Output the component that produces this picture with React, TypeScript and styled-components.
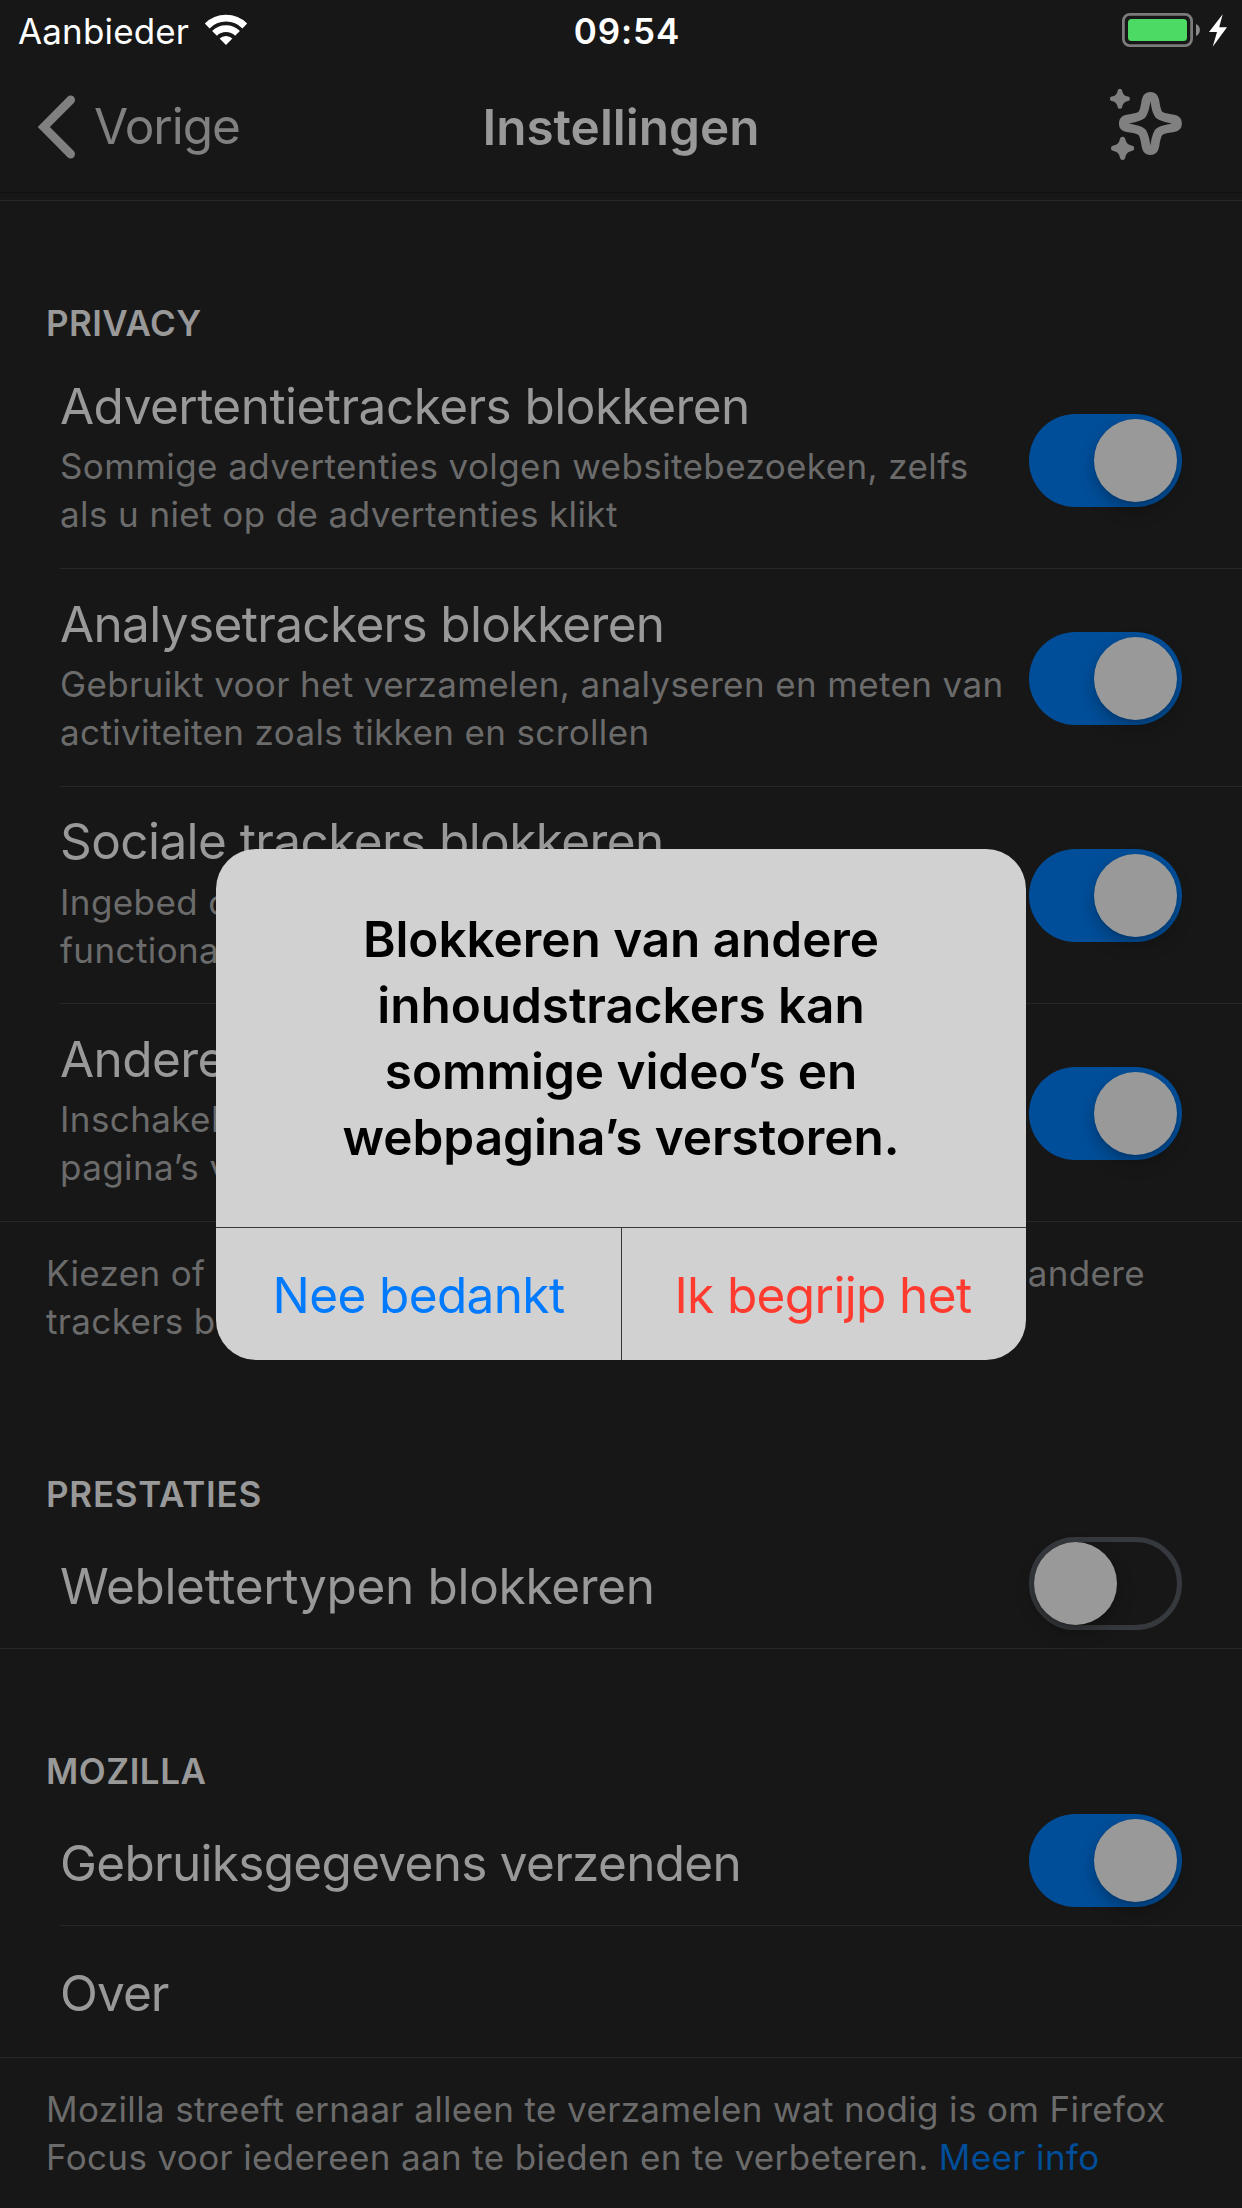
import React from 'react';
import styled, { createGlobalStyle } from 'styled-components';

const GlobalStyle = createGlobalStyle`
  * { box-sizing: border-box; }
  html, body { margin: 0; padding: 0; background: #171717; }
  body { font-family: Inter, "Liberation Sans", sans-serif; }
  button { font-family: inherit; border: 0; margin: 0; padding: 0; background: none; cursor: pointer; }
`;

const Screen = styled.div`
  position: relative;
  width: 1242px;
  height: 2208px;
  overflow: hidden;
  background: #171717;
  color: #999999;
`;

const StatusBar = styled.header`
  display: grid;
  grid-template-columns: 1fr auto 1fr;
  align-items: center;
  height: 62px;
  color: #ffffff;
  font-size: 35px;
  line-height: 44px;
`;

const Carrier = styled.div`
  display: flex;
  align-items: center;
  gap: 15px;
  padding-left: 18px;
  letter-spacing: 0.15px;

  svg { display: block; margin-bottom: 2px; }
`;

const Clock = styled.time`
  font-weight: 600;
  letter-spacing: 0.9px;
  padding-left: 12px;
`;

const Power = styled.div`
  display: flex;
  justify-content: flex-end;
  align-items: center;
  padding-right: 15px;

  svg { display: block; margin-bottom: 2px; }
`;

const NavBar = styled.nav`
  display: grid;
  grid-template-columns: 1fr auto 1fr;
  align-items: center;
  height: 131px;
  border-bottom: 1px solid #101010;
`;

const BackButton = styled.button`
  display: flex;
  align-items: center;
  gap: 18px;
  padding-left: 37px;
  color: #808080;
  font-size: 49.5px;
  line-height: 60px;
  letter-spacing: -1px;

  svg { display: block; margin-bottom: 1px; }
  span { margin-top: -2px; }
`;

const NavTitle = styled.h1`
  margin: 0;
  font-size: 49.5px;
  line-height: 60px;
  font-weight: 600;
`;

const TipsButton = styled.button`
  justify-self: end;
  padding: 0 58px 6px 0;
  color: #808080;

  svg { display: block; }
`;

const List = styled.main`
  display: flex;
  flex-direction: column;
  margin-top: 7px;
  border-top: 1px solid #272727;
`;

const SectionHeader = styled.h2<{ $height: number; $bottom: number; $tracking: number }>`
  display: flex;
  align-items: flex-end;
  height: ${p => p.$height}px;
  margin: 0;
  padding: 0 0 ${p => p.$bottom}px 46px;
  font-size: 35px;
  line-height: 20px;
  font-weight: 600;
  letter-spacing: ${p => p.$tracking}px;
`;

const RowBox = styled.div<{ $tall: boolean; $full: boolean }>`
  display: flex;
  justify-content: space-between;
  align-items: center;
  height: ${p => (p.$tall ? 217.67 : 131.67)}px;
  margin-left: ${p => (p.$full ? 0 : 60)}px;
  padding: 0 60px 0 ${p => (p.$full ? 60 : 0)}px;
  border-bottom: 1px solid #272727;
`;

const RowText = styled.div<{ $tall: boolean; $shift: number }>`
  flex: 1;
  min-width: 0;
  align-self: ${p => (p.$tall ? 'flex-start' : 'center')};
  padding-top: ${p => (p.$tall ? 24.7 : p.$shift)}px;
  white-space: nowrap;
`;

const RowTitle = styled.div<{ $tracking: number }>`
  font-size: 49.5px;
  line-height: 60px;
  letter-spacing: ${p => p.$tracking}px;
`;

const RowDetail = styled.div<{ $tracking: number }>`
  margin-top: 6.3px;
  color: #6b6b6b;
  font-size: 35px;
  line-height: 48px;
  letter-spacing: ${p => p.$tracking}px;
`;

const Track = styled.button<{ $on: boolean }>`
  display: flex;
  flex: none;
  align-items: center;
  justify-content: ${p => (p.$on ? 'flex-end' : 'flex-start')};
  width: 153px;
  height: 93px;
  margin-top: 2px;
  padding: ${p => (p.$on ? 5 : 0)}px;
  border: ${p => (p.$on ? '0' : '5px solid #35383c')};
  border-radius: 47px;
  background: ${p => (p.$on ? '#004e99' : 'transparent')};
`;

const Knob = styled.span`
  width: 83px;
  height: 83px;
  border-radius: 50%;
  background: #999999;
  box-shadow: 0 8px 18px rgba(0, 0, 0, 0.24), 0 2px 3px rgba(0, 0, 0, 0.1);
`;

const Note = styled.p`
  margin: 0;
  padding: 27.3px 0 0 46px;
  color: #6b6b6b;
  font-size: 35px;
  line-height: 48px;
  letter-spacing: 0.36px;
  white-space: nowrap;
`;

const SpreadLine = styled.span`
  display: flex;
  justify-content: space-between;
  width: 1099px;
`;

const NoteLink = styled.a`
  color: #004e99;
  text-decoration: none;
`;

const Overlay = styled.div`
  position: absolute;
  inset: 0;
  display: flex;
  align-items: center;
  justify-content: center;
  padding-top: 1px;
`;

const Alert = styled.section`
  width: 810px;
  overflow: hidden;
  border-radius: 40px;
  background: #d1d1d1;
`;

const AlertTitle = styled.h3`
  margin: 0;
  padding: 57px 0;
  color: #000000;
  font-size: 49.5px;
  line-height: 66px;
  font-weight: 600;
  letter-spacing: -0.06px;
  text-align: center;
`;

const AlertActions = styled.div`
  display: grid;
  grid-template-columns: 405px 1fr;
  height: 133px;
  border-top: 1px solid #38383b;
`;

const AlertButton = styled.button<{ $color: string; $divided?: boolean }>`
  border-left: ${p => (p.$divided ? '1px solid #38383b' : '0')};
  padding: 2px ${p => (p.$divided ? 2 : 0)}px 0 0;
  color: ${p => p.$color};
  font-size: 49.5px;
  line-height: 60px;
  letter-spacing: -0.62px;
`;

const WifiIcon = () => (
  <svg width="44" height="34" viewBox="206 13 44 34" fill="none" stroke="#fff" strokeWidth="6.8">
    <path d="M209.2 26 A26.6 26.6 0 0 1 246.8 26" />
    <path d="M216.5 33.3 A16.3 16.3 0 0 1 239.5 33.3" />
    <path d="M228 45 L221.6 38.6 A9.1 9.1 0 0 1 234.4 38.6 Z" fill="#fff" stroke="none" />
  </svg>
);

const BatteryIcon = () => (
  <svg width="106" height="36" viewBox="1121 12 106 36">
    <rect x="1123.4" y="14.4" width="68.2" height="31.2" rx="6.5" fill="none" stroke="#7b7b7b" strokeWidth="2.8" />
    <rect x="1128" y="19" width="59" height="22" rx="3.5" fill="#4cd964" />
    <path d="M1196 24 C1201.2 26 1201.2 34 1196 36 Z" fill="#8b8b8b" />
    <path d="M1222.7 14.2 L1209 31.9 L1217 32 L1212.7 46.8 L1227 27.2 L1219.2 27.2 Z" fill="#fff" />
  </svg>
);

const ChevronIcon = () => (
  <svg width="39" height="66" viewBox="37 93.5 39 66" fill="none" stroke="currentColor" strokeWidth="8.6" strokeLinecap="round">
    <path d="M70.7 99.4 L43.8 126.5 L70.7 153.6" />
  </svg>
);

const smallStar =
  'M-2.2 -8.4 Q-1.9 -10 0 -10 Q1.9 -10 2.2 -8.4 C3.1 -4.4 4.4 -3.1 8.4 -2.2 Q10 -1.9 10 0 Q10 1.9 8.4 2.2 C4.4 3.1 3.1 4.4 2.2 8.4 Q1.9 10 0 10 Q-1.9 10 -2.2 8.4 C-3.1 4.4 -4.4 3.1 -8.4 2.2 Q-10 1.9 -10 0 Q-10 -1.9 -8.4 -2.2 C-4.4 -3.1 -3.1 -4.4 -2.2 -8.4 Z';

const SparkleIcon = () => (
  <svg width="76" height="78" viewBox="1108 85 76 78" fill="currentColor">
    <path
      transform="translate(1150.4 123.4)"
      fill="none"
      stroke="currentColor"
      strokeWidth="8.8"
      d="M0 -27.1 C2.4 -27.1 3.8 -25.5 4.3 -23 C5.6 -15.5 5.8 -11.8 8.6 -8.6 C11.8 -5.8 15.5 -5.6 23 -4.3 C25.5 -3.8 27.1 -2.4 27.1 0 C27.1 2.4 25.5 3.8 23 4.3 C15.5 5.6 11.8 5.8 8.6 8.6 C5.8 11.8 5.6 15.5 4.3 23 C3.8 25.5 2.4 27.1 0 27.1 C-2.4 27.1 -3.8 25.5 -4.3 23 C-5.6 15.5 -5.8 11.8 -8.6 8.6 C-11.8 5.8 -15.5 5.6 -23 4.3 C-25.5 3.8 -27.1 2.4 -27.1 0 C-27.1 -2.4 -25.5 -3.8 -23 -4.3 C-15.5 -5.6 -11.8 -5.8 -8.6 -8.6 C-5.8 -11.8 -5.6 -15.5 -4.3 -23 C-3.8 -25.5 -2.4 -27.1 0 -27.1 Z"
    />
    <path transform="translate(1119.9 98.8)" d={smallStar} />
    <path transform="translate(1122.6 148.3) scale(1.16)" d={smallStar} />
  </svg>
);

type RowProps = {
  title: string;
  tracking?: number;
  detail?: [string, string];
  detailTracking?: number;
  on?: boolean;
  full?: boolean;
  shift?: number;
};

const Row = ({ title, tracking = -0.58, detail, detailTracking = 0.4, on, full = false, shift = 6 }: RowProps) => (
  <RowBox $tall={!!detail} $full={full}>
    <RowText $tall={!!detail} $shift={shift}>
      <RowTitle $tracking={tracking}>{title}</RowTitle>
      {detail && (
        <RowDetail $tracking={detailTracking}>
          {detail[0]}
          <br />
          {detail[1]}
        </RowDetail>
      )}
    </RowText>
    {on !== undefined && (
      <Track $on={on} role="switch" aria-checked={on} aria-label={title}>
        <Knob />
      </Track>
    )}
  </RowBox>
);

export default function App() {
  return (
    <>
      <GlobalStyle />
      <Screen>
        <StatusBar>
          <Carrier>
            Aanbieder
            <WifiIcon />
          </Carrier>
          <Clock>09:54</Clock>
          <Power>
            <BatteryIcon />
          </Power>
        </StatusBar>
        <NavBar>
          <BackButton>
            <ChevronIcon />
            <span>Vorige</span>
          </BackButton>
          <NavTitle>Instellingen</NavTitle>
          <TipsButton aria-label="Tips">
            <SparkleIcon />
          </TipsButton>
        </NavBar>
        <List>
          <SectionHeader $height={150.33} $bottom={18.3} $tracking={0.4}>PRIVACY</SectionHeader>
          <Row
            title="Advertentietrackers blokkeren"
            tracking={-0.53}
            detail={['Sommige advertenties volgen websitebezoeken, zelfs', 'als u niet op de advertenties klikt']}
            on
          />
          <Row
            title="Analysetrackers blokkeren"
            tracking={-0.65}
            detail={['Gebruikt voor het verzamelen, analyseren en meten van', 'activiteiten zoals tikken en scrollen']}
            detailTracking={0.37}
            on
          />
          <Row
            title="Sociale trackers blokkeren"
            detail={['Ingebed om uw bezoeken te volgen en', 'functionaliteit zoals deelknoppen weer te geven']}
            on
          />
          <Row
            title="Andere inhoudstrackers blokkeren"
            detail={['Inschakelen kan ervoor zorgen dat sommige', 'pagina’s vreemd gaan werken']}
            on
            full
          />
          <Note>
            <SpreadLine>
              <span>Kiezen of u advertentie-, analyse-, sociale en</span>
              <span>andere</span>
            </SpreadLine>
            trackers blokkeert
          </Note>
          <SectionHeader $height={172} $bottom={13} $tracking={0.74}>PRESTATIES</SectionHeader>
          <Row title="Weblettertypen blokkeren" tracking={-0.33} on={false} full />
          <SectionHeader $height={145.33} $bottom={13} $tracking={0.54}>MOZILLA</SectionHeader>
          <Row title="Gebruiksgegevens verzenden" tracking={-0.7} on />
          <Row title="Over" tracking={-0.9} full shift={3} />
          <Note>
            Mozilla streeft ernaar alleen te verzamelen wat nodig is om Firefox
            <br />
            Focus voor iedereen aan te bieden en te verbeteren. <NoteLink href="#">Meer info</NoteLink>
          </Note>
        </List>
        <Overlay>
          <Alert role="alertdialog">
            <AlertTitle>
              Blokkeren van andere
              <br />
              inhoudstrackers kan
              <br />
              sommige video’s en
              <br />
              webpagina’s verstoren.
            </AlertTitle>
            <AlertActions>
              <AlertButton $color="#007aff">Nee bedankt</AlertButton>
              <AlertButton $color="#ff3b30" $divided>
                Ik begrijp het
              </AlertButton>
            </AlertActions>
          </Alert>
        </Overlay>
      </Screen>
    </>
  );
}
